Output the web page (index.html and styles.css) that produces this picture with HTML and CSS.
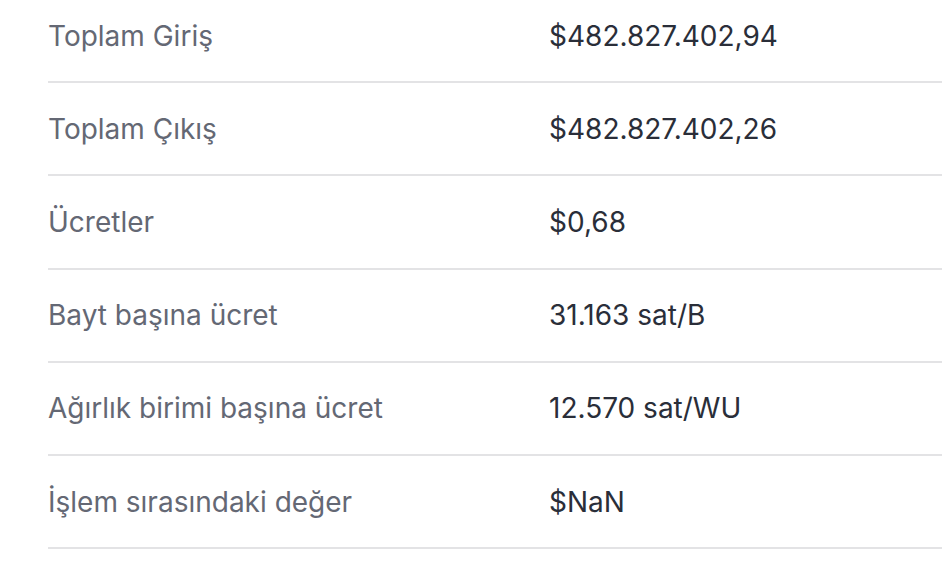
FILE: index.html
```html
<!DOCTYPE html>
<html lang="tr">
<head>
<meta charset="utf-8">
<link rel="stylesheet" href="styles.css">
</head>
<body>
<div class="details">
  <div class="row"><div class="label">Toplam Giriş</div><div class="value">$482.827.402,94</div></div>
  <div class="row"><div class="label">Toplam Çıkış</div><div class="value">$482.827.402,26</div></div>
  <div class="row"><div class="label">Ücretler</div><div class="value">$0,68</div></div>
  <div class="row"><div class="label">Bayt başına ücret</div><div class="value">31.163 sat/B</div></div>
  <div class="row"><div class="label">Ağırlık birimi başına ücret</div><div class="value">12.570 sat/WU</div></div>
  <div class="row"><div class="label">İşlem sırasındaki değer</div><div class="value">$NaN</div></div>
</div>
</body>
</html>
```
FILE: styles.css
```css
html, body {
  margin: 0;
  padding: 0;
  background: #ffffff;
}
body {
  font-family: Inter, "Noto Sans", sans-serif;
  font-size: 28px;
  overflow: hidden;
}
.details {
  margin: -10px 0 0 48px;
}
.row {
  display: grid;
  grid-template-columns: 501px 1fr;
  align-items: center;
  height: 91.2px;
  border-bottom: 2px solid #e3e3e5;
  line-height: 36px;
}
.label {
  color: #646874;
}
.value {
  color: #2a2e39;
}
```
